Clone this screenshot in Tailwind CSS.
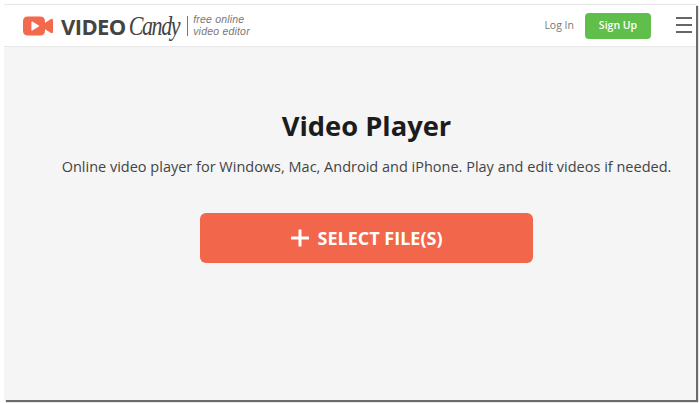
<!DOCTYPE html>
<html>
<head>
<script src="https://cdn.jsdelivr.net/npm/@tailwindcss/browser@4"></script>
</head>
<body class="w-[700px] h-[403px] bg-white overflow-hidden font-['Open_Sans',sans-serif]">
<div class="w-[700px] h-[403px] pt-[4px] pl-[4px] pr-[4px] pb-[3px]">
  <div class="w-[692px] h-[396px] flex flex-col bg-[#f5f5f5] border-t border-[#e6e6e6] shadow-[2px_2px_1px_#6b6b6b]">
    <header class="h-[42px] shrink-0 bg-white border-b border-[#e8e8e8] flex items-center pl-[19px] pr-[4px]">
      <svg class="w-[31px] h-[20px] shrink-0" viewBox="0 0 31 20">
        <path d="M5 0.5H17Q22 0.5 22 5.5V14.5Q22 19.5 17 19.5H5Q0 19.5 0 14.5V5.5Q0 0.5 5 0.5Z" fill="#f4694c"/>
        <path d="M21 7.5L28 3Q30 2 30 4.5V15.5Q30 18 28 17L21 12.5Z" fill="#f4694c"/>
        <path d="M9 6L15.5 10L9 14Z" fill="#fff" stroke="#fff" stroke-width="1.2" stroke-linejoin="round"/>
      </svg>
      <span class="ml-[7px] text-[22px] leading-none font-bold text-[#444] tracking-[-0.6px]">VIDEO</span>
      <span class="ml-[3px] inline-block origin-center scale-y-[1.25] text-[22px] leading-none italic text-[#444] tracking-[-1.4px] font-['Liberation_Serif',serif]">Candy</span>
      <div class="ml-[8px] w-px h-[20px] bg-[#777]"></div>
      <div class="ml-[5px] text-[10.5px] leading-[11.5px] italic text-[#777] font-['Liberation_Sans',sans-serif] tracking-[0.2px]">
        <div>free online</div>
        <div>video editor</div>
      </div>
      <span class="ml-auto text-[10.5px] text-[#777]">Log In</span>
      <div class="ml-[11px] w-[66px] h-[26px] rounded-[4px] bg-[#5fbf4a] flex items-center justify-center text-[10.5px] font-semibold text-white">Sign Up</div>
      <div class="ml-[25px] w-[16px] flex flex-col gap-[5px] -mt-[1px]">
        <div class="h-[2px] bg-[#666]"></div>
        <div class="h-[2px] bg-[#666]"></div>
        <div class="h-[2px] bg-[#666]"></div>
      </div>
    </header>
    <main class="flex flex-col items-center pl-[33px]">
      <h1 class="mt-[59px] text-[27.3px] leading-[40px] font-bold text-[#1c1c1c]">Video Player</h1>
      <p class="mt-[10px] text-[14.5px] leading-[22px] text-[#444] whitespace-nowrap">Online video player for Windows, Mac, Android and iPhone. Play and edit videos if needed.</p>
      <div class="mt-[35px] w-[333px] h-[50px] rounded-[6px] bg-[#f2664b] flex items-center justify-center gap-[7px] text-white">
        <svg class="w-[20px] h-[18px]" viewBox="0 0 20 18"><path d="M10 0.5V17.5M1 9H19" stroke="#fff" stroke-width="3" fill="none"/></svg>
        <span class="text-[18px] font-bold">SELECT FILE(S)</span>
      </div>
    </main>
  </div>
</div>
</body>
</html>
